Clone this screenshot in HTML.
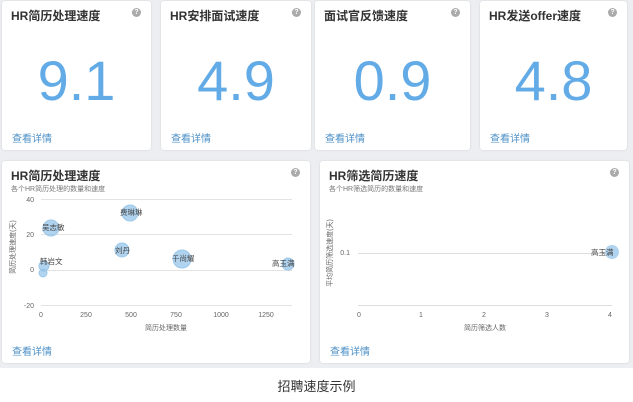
<!DOCTYPE html>
<html><head><meta charset="utf-8"><style>
*{margin:0;padding:0;box-sizing:border-box}
body{width:633px;height:402px;background:#fff;position:relative;overflow:hidden;font-family:"Liberation Sans","Noto Sans CJK SC",sans-serif}
.bg{position:absolute;left:0;top:0;width:633px;height:368px;background:#eceef1}
.card{position:absolute;background:#fff;border-radius:3px;box-shadow:0 0 2px rgba(0,0,0,.12)}
.t{position:absolute;left:9px;top:6px;font-size:12px;font-weight:bold;color:#333}
.q{position:absolute;right:10px;top:7px;width:9px;height:9px;border-radius:50%;background:#aaa;color:#fff;font-size:7px;line-height:9px;text-align:center;font-weight:bold}
.num{position:absolute;left:0;right:0;top:47px;text-align:center;font-size:56px;color:#63abe6;line-height:66px}
.more{position:absolute;left:10px;bottom:5px;font-size:10px;color:#4b8fc6}
.sub{position:absolute;left:9px;top:23px;font-size:7px;color:#777}
.cap{position:absolute;left:0;width:633px;top:376px;text-align:center;font-size:13px;color:#333}
</style></head><body>
<div class="bg"></div>
<div class="card" style="left:2px;top:1px;width:149px;height:149px"><div class="t">HR简历处理速度</div><div class="q">?</div><div class="num">9.1</div><div class="more">查看详情</div></div>
<div class="card" style="left:161px;top:1px;width:150px;height:149px"><div class="t">HR安排面试速度</div><div class="q">?</div><div class="num">4.9</div><div class="more">查看详情</div></div>
<div class="card" style="left:315px;top:1px;width:155px;height:149px"><div class="t">面试官反馈速度</div><div class="q">?</div><div class="num">0.9</div><div class="more">查看详情</div></div>
<div class="card" style="left:480px;top:1px;width:147px;height:149px"><div class="t">HR发送offer速度</div><div class="q">?</div><div class="num">4.8</div><div class="more">查看详情</div></div>

<div class="card" style="left:2px;top:161px;width:308px;height:202px"><div class="t">HR简历处理速度</div><div class="q">?</div><div class="sub">各个HR简历处理的数量和速度</div><div class="more">查看详情</div></div>
<div class="card" style="left:320px;top:161px;width:309px;height:202px"><div class="t">HR筛选简历速度</div><div class="q">?</div><div class="sub">各个HR筛选简历的数量和速度</div><div class="more">查看详情</div></div>

<svg style="position:absolute;left:0;top:0" width="633" height="402" font-family="Liberation Sans,Noto Sans CJK SC,sans-serif">
<g stroke="#e3e3e3" stroke-width="1">
<line x1="41" y1="199.5" x2="292" y2="199.5"/><line x1="41" y1="234.5" x2="292" y2="234.5"/><line x1="41" y1="270.5" x2="292" y2="270.5"/><line x1="41" y1="305.5" x2="292" y2="305.5"/>
</g>
<g font-size="7" fill="#666" text-anchor="end">
<text x="34" y="202">40</text><text x="34" y="237">20</text><text x="34" y="272">0</text><text x="34" y="308">-20</text>
</g>
<g font-size="7" fill="#666" text-anchor="middle">
<text x="41" y="317">0</text><text x="86" y="317">250</text><text x="131" y="317">500</text><text x="176" y="317">750</text><text x="221" y="317">1000</text><text x="266" y="317">1250</text>
<text x="166" y="330">简历处理数量</text>
</g>
<text transform="translate(15,247) rotate(-90)" font-size="7" fill="#666" text-anchor="middle">简历处理速度(天)</text>
<g fill="#8fc0e8" fill-opacity=".7" stroke="#9cc8ea">
<circle cx="130" cy="213" r="8"/><circle cx="51" cy="228" r="8"/><circle cx="122" cy="250" r="7"/><circle cx="182" cy="259" r="9"/><circle cx="44" cy="266" r="5"/><circle cx="43" cy="273" r="4"/><circle cx="288" cy="264" r="6"/>
</g>
<g font-size="7.5" fill="#444">
<text x="120" y="215">费琳琳</text><text x="42" y="230">吴志敏</text><text x="115" y="253">刘丹</text><text x="172" y="261">千尚耀</text><text x="40" y="264">韩岩文</text><text x="272" y="266">高玉满</text>
</g>
<line x1="358" y1="253.5" x2="612" y2="253.5" stroke="#ddd"/>
<line x1="358" y1="305.5" x2="612" y2="305.5" stroke="#ddd"/>
<text x="350" y="255" font-size="7" fill="#666" text-anchor="end">0.1</text>
<g font-size="7" fill="#666" text-anchor="middle">
<text x="359" y="317">0</text><text x="421" y="317">1</text><text x="484" y="317">2</text><text x="547" y="317">3</text><text x="610" y="317">4</text>
<text x="485" y="330">简历筛选人数</text>
</g>
<text transform="translate(332,253) rotate(-90)" font-size="7" fill="#666" text-anchor="middle">平均简历筛选速度(天)</text>
<circle cx="612" cy="252" r="7" fill="#8fc0e8" fill-opacity=".7"/>
<text x="591" y="255" font-size="7.5" fill="#444">高玉满</text>
</svg>
<div class="cap">招聘速度示例</div>
</body></html>
